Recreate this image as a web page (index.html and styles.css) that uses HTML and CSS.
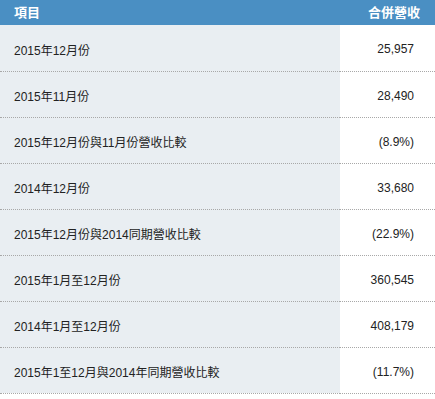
FILE: index.html
```html
<!DOCTYPE html>
<html lang="zh-Hant">
<head>
<meta charset="utf-8">
<link rel="stylesheet" href="styles.css">
</head>
<body>
<table class="rev">
  <thead>
    <tr><th class="c-item">項目</th><th class="c-val">合併營收</th></tr>
  </thead>
  <tbody>
    <tr><td class="c-item">2015年12月份</td><td class="c-val">25,957</td></tr>
    <tr><td class="c-item">2015年11月份</td><td class="c-val">28,490</td></tr>
    <tr><td class="c-item">2015年12月份與11月份營收比較</td><td class="c-val">(8.9%)</td></tr>
    <tr><td class="c-item">2014年12月份</td><td class="c-val">33,680</td></tr>
    <tr><td class="c-item">2015年12月份與2014同期營收比較</td><td class="c-val">(22.9%)</td></tr>
    <tr><td class="c-item">2015年1月至12月份</td><td class="c-val">360,545</td></tr>
    <tr><td class="c-item">2014年1月至12月份</td><td class="c-val">408,179</td></tr>
    <tr><td class="c-item">2015年1至12月與2014年同期營收比較</td><td class="c-val">(11.7%)</td></tr>
  </tbody>
</table>
</body>
</html>
```
FILE: styles.css
```css
html, body {
  margin: 0;
  padding: 0;
  background: #fff;
}
body {
  font-family: "Liberation Sans", Arial, "Noto Sans CJK TC", sans-serif;
  font-size: 12px;
  color: #222;
}
.rev {
  width: 435px;
  border-collapse: collapse;
  border-spacing: 0;
}
.rev th {
  background: #4a8fc3;
  color: #fff;
  font-weight: bold;
  font-size: 13px;
  height: 25px;
  padding: 0 15px 0 14px;
  line-height: 25px;
  box-sizing: border-box;
}
.rev th.c-item { text-align: left; }
.rev th.c-val { text-align: right; }
.rev td {
  height: 46px;
  box-sizing: border-box;
  border-bottom: 1px dotted #a8a8a8;
  padding: 0;
  vertical-align: middle;
}
.rev td.c-item {
  width: 340px;
  background: #e9eef2;
  padding-left: 14px;
  padding-top: 3px;
}
.rev td.c-val {
  text-align: right;
  padding-right: 21px;
  padding-top: 3px;
}
```
